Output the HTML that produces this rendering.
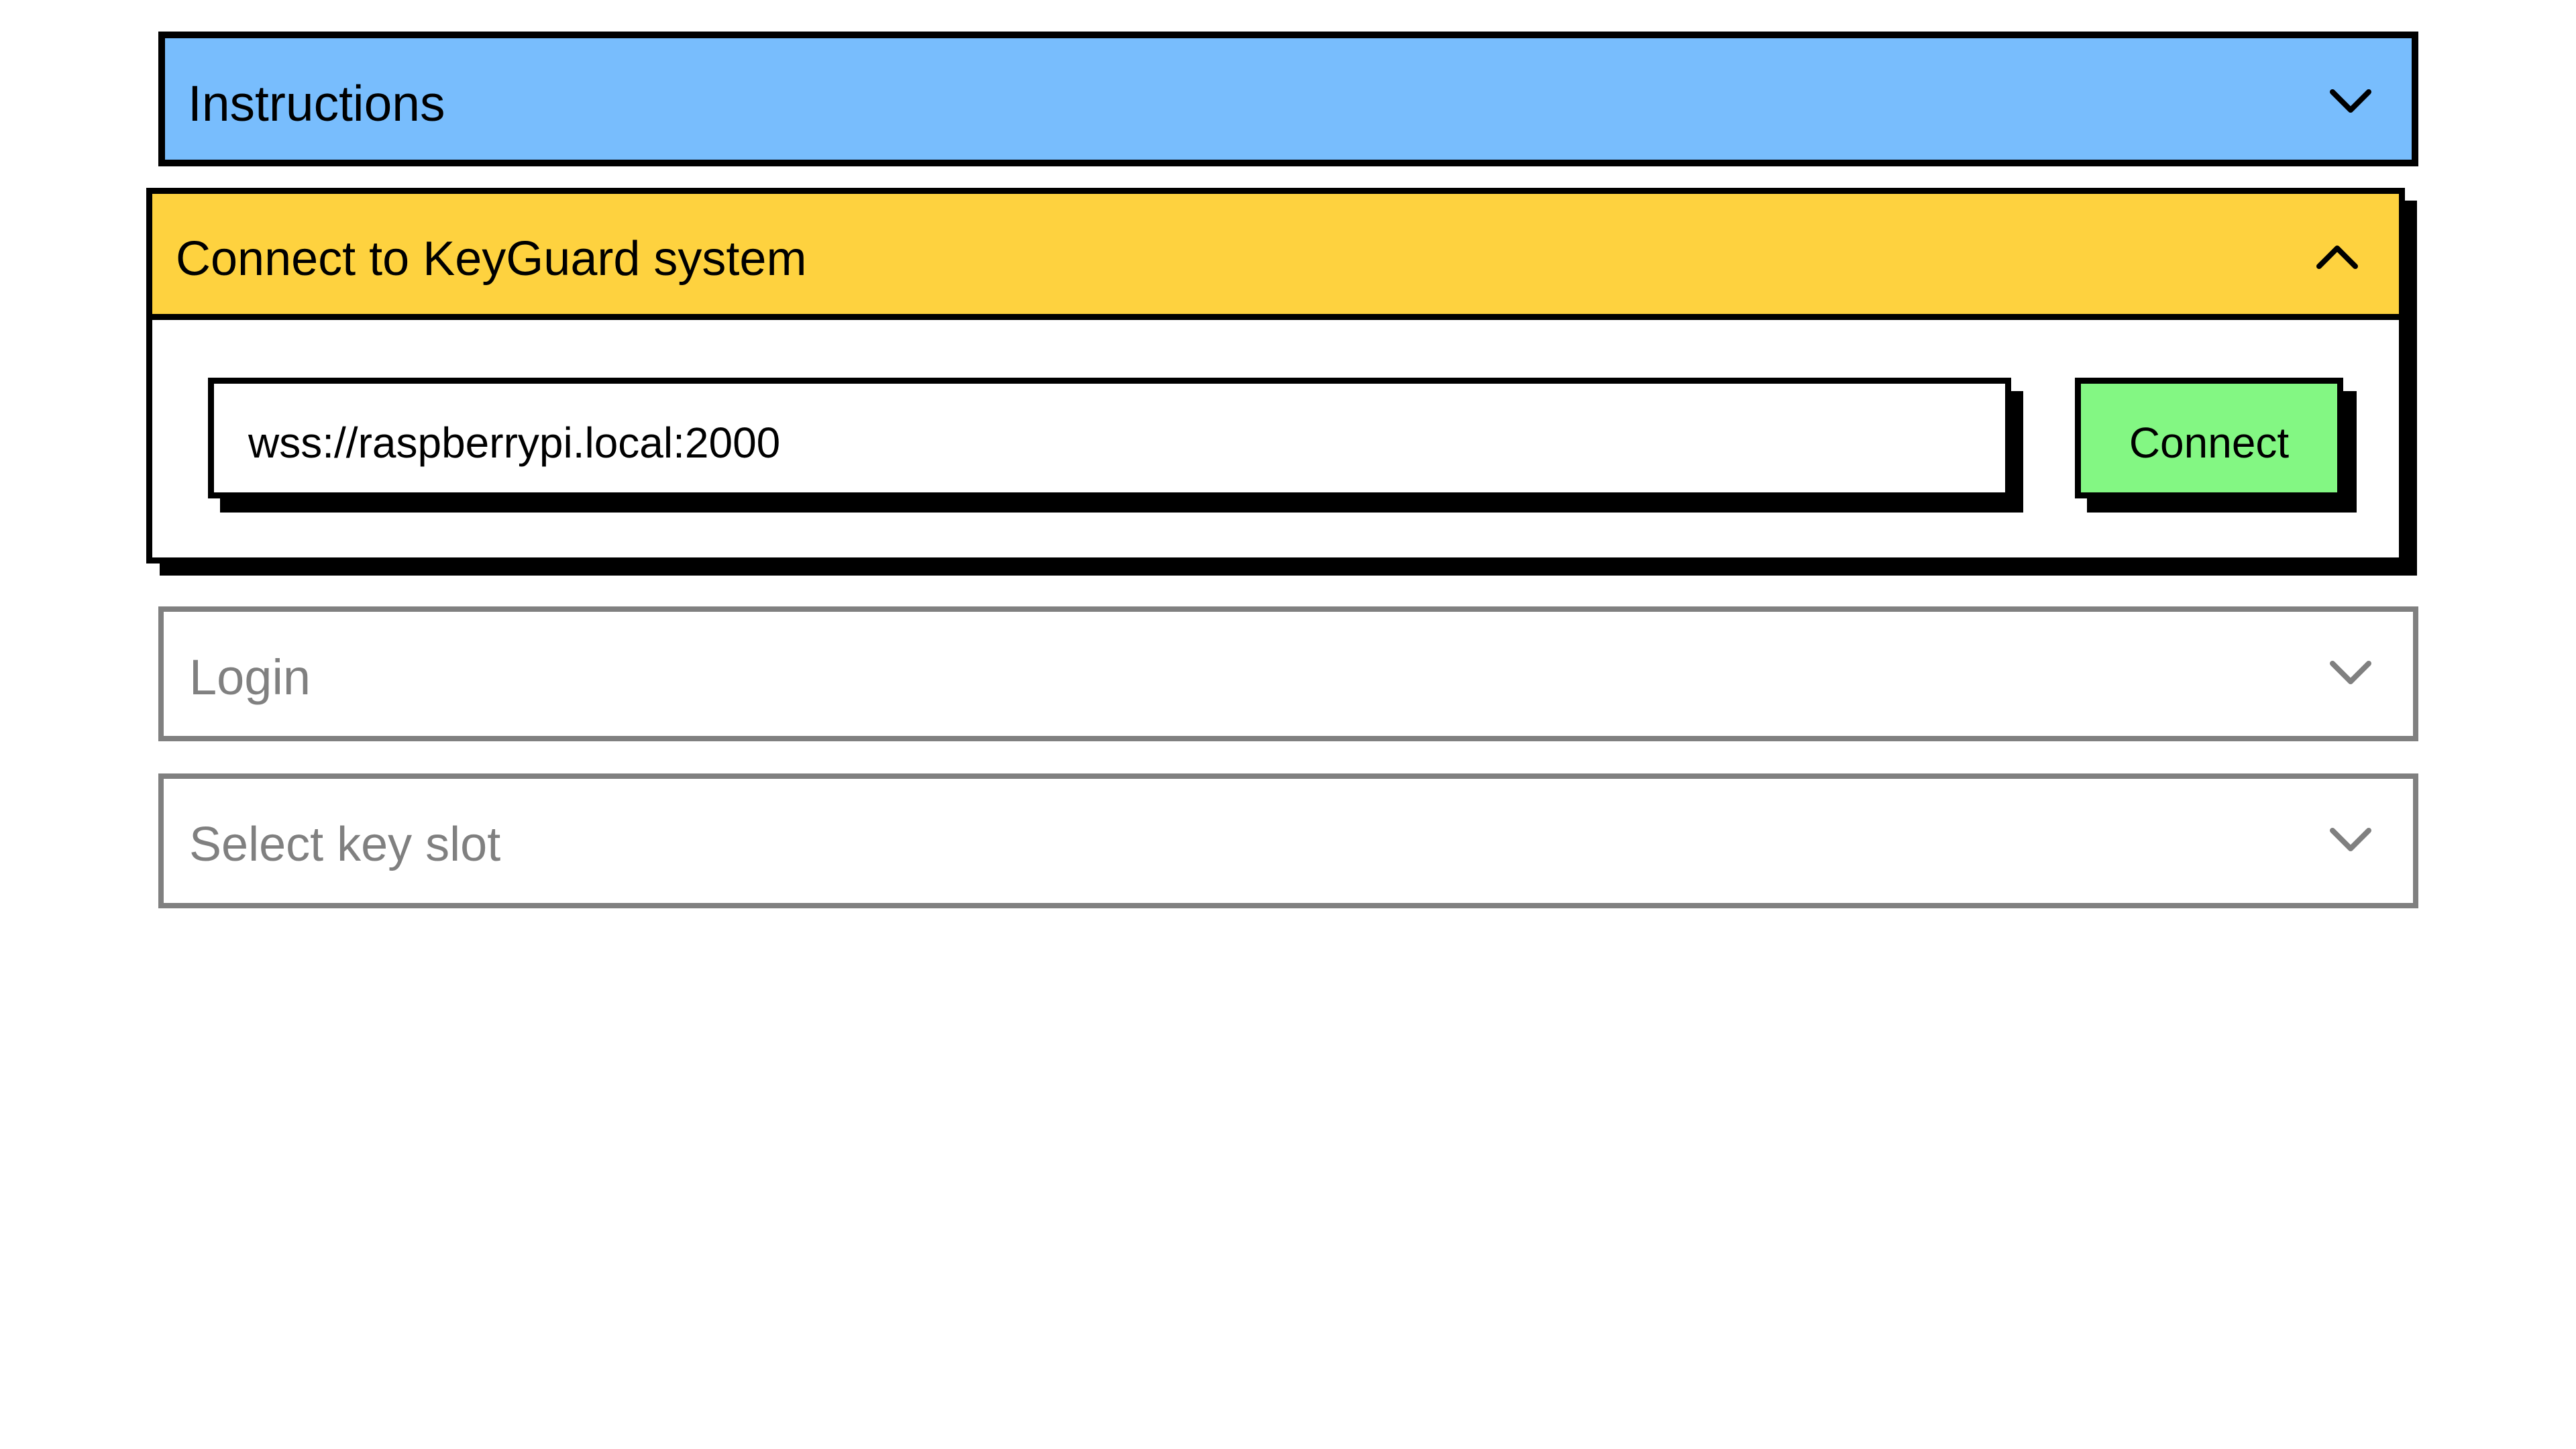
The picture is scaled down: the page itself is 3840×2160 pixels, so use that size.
<!DOCTYPE html>
<html><head><meta charset="utf-8"><style>
html,body{margin:0;padding:0;background:#fff;width:3840px;height:2160px;overflow:hidden;font-family:"Liberation Sans",sans-serif;}
.abs{position:absolute;box-sizing:border-box;}
.txt{position:absolute;white-space:nowrap;line-height:1;}
svg{position:absolute;overflow:visible}
</style></head><body>

<!-- Instructions -->
<div class="abs" style="left:236px;top:47px;width:3369px;height:201px;background:#78bdfd;border:10px solid #000;"></div>
<div class="txt" style="left:280px;top:117px;font-size:75px;color:#000;">Instructions</div>
<svg style="left:3472px;top:132px" width="64" height="40"><polyline points="5,5 32,32 59,5" fill="none" stroke="#000" stroke-width="8" stroke-linecap="round" stroke-linejoin="round"/></svg>

<!-- Connect panel -->
<div class="abs" style="left:238px;top:299px;width:3365px;height:559px;background:#000;"></div>
<div class="abs" style="left:218px;top:280px;width:3367px;height:560px;background:#fff;border:9px solid #000;"></div>
<div class="abs" style="left:218px;top:280px;width:3367px;height:197px;background:#fed23f;border:9px solid #000;"></div>
<div class="txt" style="left:262px;top:350px;font-size:72px;color:#000;">Connect to KeyGuard system</div>
<svg style="left:3452px;top:362px" width="64" height="40"><polyline points="5,35 32,8 59,35" fill="none" stroke="#000" stroke-width="8" stroke-linecap="round" stroke-linejoin="round"/></svg>

<!-- input -->
<div class="abs" style="left:328px;top:583px;width:2688px;height:181px;background:#000;"></div>
<div class="abs" style="left:310px;top:563px;width:2688px;height:180px;background:#fff;border:9px solid #000;"></div>
<div class="txt" style="left:370px;top:628px;font-size:64px;color:#000;">wss://raspberrypi.local:2000</div>

<!-- button -->
<div class="abs" style="left:3111px;top:583px;width:402px;height:181px;background:#000;"></div>
<div class="abs" style="left:3093px;top:563px;width:400px;height:180px;background:#83f783;border:9px solid #000;"></div>
<div class="txt" style="left:3093px;width:400px;text-align:center;top:628px;font-size:64px;color:#000;">Connect</div>

<!-- Login -->
<div class="abs" style="left:236px;top:904px;width:3369px;height:201px;background:#fff;border:8px solid #808080;"></div>
<div class="txt" style="left:282px;top:973px;font-size:74px;color:#808080;">Login</div>
<svg style="left:3472px;top:984px" width="64" height="40"><polyline points="5,5 32,32 59,5" fill="none" stroke="#808080" stroke-width="8" stroke-linecap="round" stroke-linejoin="round"/></svg>

<!-- Select key slot -->
<div class="abs" style="left:236px;top:1153px;width:3369px;height:201px;background:#fff;border:8px solid #808080;"></div>
<div class="txt" style="left:282px;top:1223px;font-size:72px;color:#808080;">Select key slot</div>
<svg style="left:3472px;top:1233px" width="64" height="40"><polyline points="5,5 32,32 59,5" fill="none" stroke="#808080" stroke-width="8" stroke-linecap="round" stroke-linejoin="round"/></svg>

</body></html>
